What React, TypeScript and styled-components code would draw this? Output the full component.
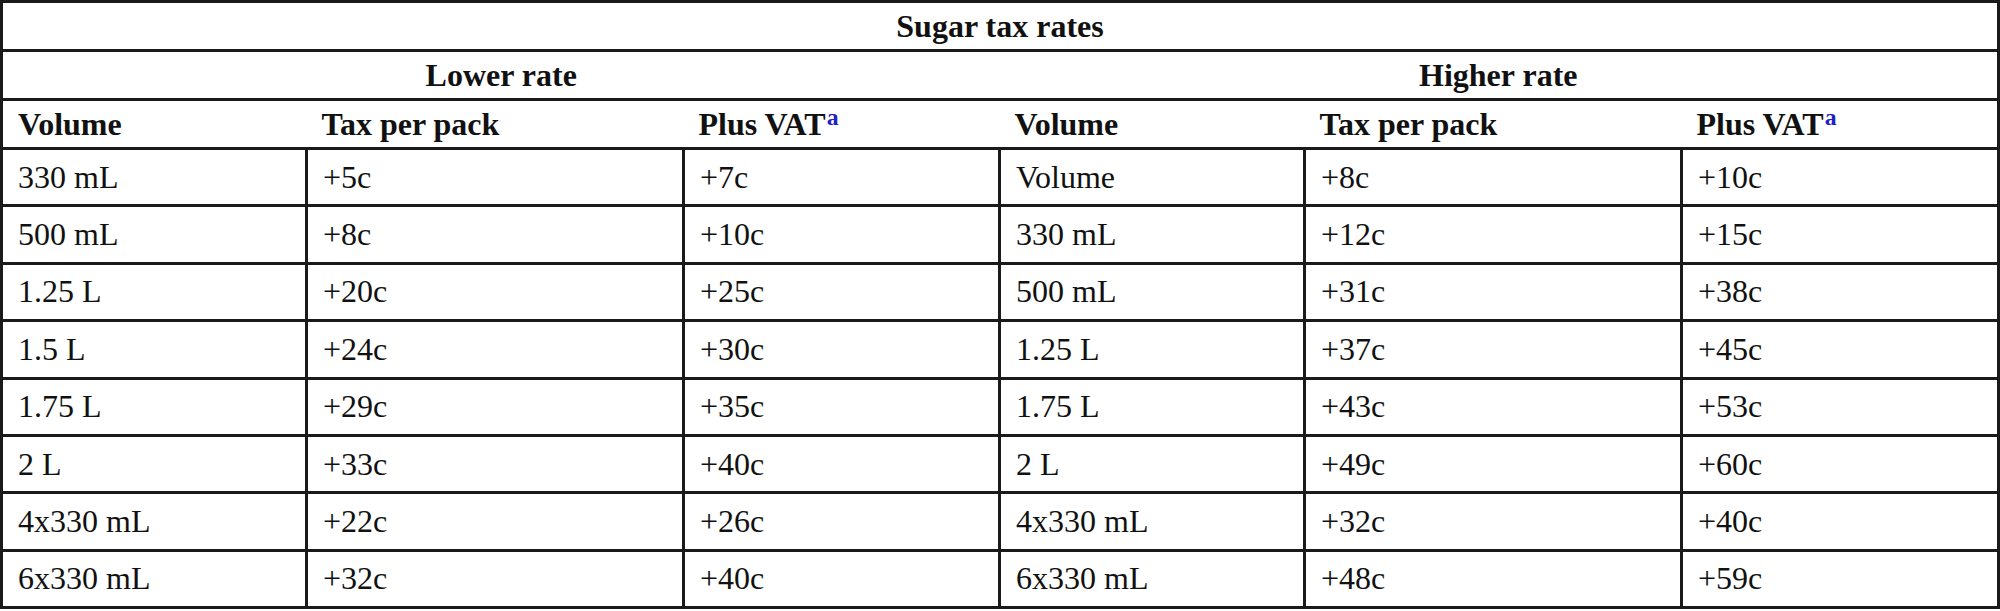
import React from "react";
import styled, { createGlobalStyle } from "styled-components";

const Global = createGlobalStyle`
  html, body { margin: 0; padding: 0; background: #fff; }
  body { font-family: "Liberation Serif", "Times New Roman", serif; color: #111; }
`;

const Table = styled.table`
  width: 2000px;
  table-layout: fixed;
  border-collapse: collapse;
  font-family: "Liberation Serif", "Times New Roman", serif;
  font-size: 32px;
  color: #111;
  border: 3px solid #1a1a1a;
`;

const HeadRow = styled.tr`
  height: 49px;
`;

const BodyRow = styled.tr`
  height: 57.4px;
`;

const HeadCell = styled.th<{ $align?: "left" | "center" }>`
  text-align: ${(p) => p.$align ?? "left"};
  font-weight: 700;
  padding: 0 15px;
  border-top: 3px solid #1a1a1a;
  border-bottom: 3px solid #1a1a1a;
  vertical-align: middle;
  white-space: nowrap;
`;

const Cell = styled.td`
  padding: 0 15px;
  border: 3px solid #1a1a1a;
  vertical-align: middle;
  white-space: nowrap;
  font-weight: 400;
`;

const Note = styled.sup`
  color: #2020c8;
  font-size: 0.74em;
  font-weight: 700;
  vertical-align: 0.42em;
  line-height: 0;
  margin-left: 1px;
`;

const widths = [305, 377, 316, 305, 377, 317];

const rows: string[][] = [
  ["330 mL", "+5c", "+7c", "Volume", "+8c", "+10c"],
  ["500 mL", "+8c", "+10c", "330 mL", "+12c", "+15c"],
  ["1.25 L", "+20c", "+25c", "500 mL", "+31c", "+38c"],
  ["1.5 L", "+24c", "+30c", "1.25 L", "+37c", "+45c"],
  ["1.75 L", "+29c", "+35c", "1.75 L", "+43c", "+53c"],
  ["2 L", "+33c", "+40c", "2 L", "+49c", "+60c"],
  ["4x330 mL", "+22c", "+26c", "4x330 mL", "+32c", "+40c"],
  ["6x330 mL", "+32c", "+40c", "6x330 mL", "+48c", "+59c"],
];

export default function App() {
  return (
    <>
      <Global />
      <Table>
        <colgroup>
          {widths.map((w, i) => (
            <col key={i} style={{ width: `${w}px` }} />
          ))}
        </colgroup>
        <thead>
          <HeadRow>
            <HeadCell colSpan={6} $align="center">Sugar tax rates</HeadCell>
          </HeadRow>
          <HeadRow>
            <HeadCell colSpan={3} $align="center">Lower rate</HeadCell>
            <HeadCell colSpan={3} $align="center">Higher rate</HeadCell>
          </HeadRow>
          <HeadRow>
            <HeadCell>Volume</HeadCell>
            <HeadCell>Tax per pack</HeadCell>
            <HeadCell>
              Plus VAT<Note>a</Note>
            </HeadCell>
            <HeadCell>Volume</HeadCell>
            <HeadCell>Tax per pack</HeadCell>
            <HeadCell>
              Plus VAT<Note>a</Note>
            </HeadCell>
          </HeadRow>
        </thead>
        <tbody>
          {rows.map((r, i) => (
            <BodyRow key={i}>
              {r.map((c, j) => (
                <Cell key={j}>{c}</Cell>
              ))}
            </BodyRow>
          ))}
        </tbody>
      </Table>
    </>
  );
}
